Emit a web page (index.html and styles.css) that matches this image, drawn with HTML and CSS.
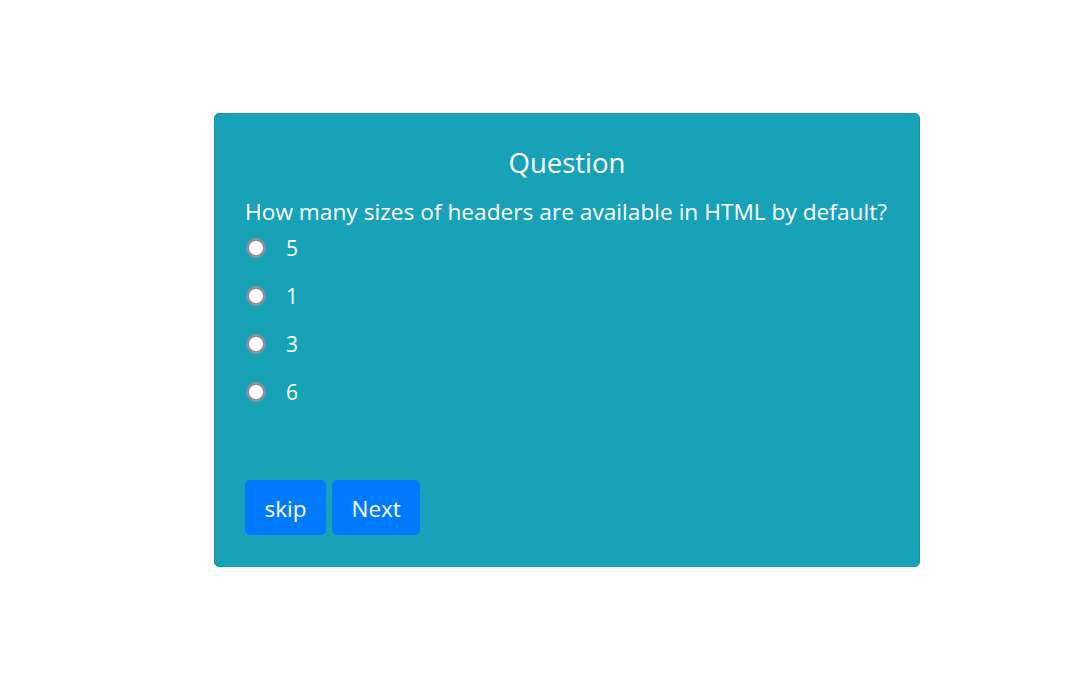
FILE: index.html
```html
<!DOCTYPE html>
<html lang="en">
<head>
<meta charset="utf-8">
<title>Quiz</title>
<link rel="stylesheet" href="styles.css">
</head>
<body>
<main class="page">
  <section class="card">
    <h3 class="card-title">Question</h3>
    <p class="question">How many sizes of headers are available in HTML by default?</p>
    <ul class="options">
      <li class="option"><label><input type="radio" name="answer" class="radio"><span class="opt-text">5</span></label></li>
      <li class="option"><label><input type="radio" name="answer" class="radio"><span class="opt-text">1</span></label></li>
      <li class="option"><label><input type="radio" name="answer" class="radio"><span class="opt-text">3</span></label></li>
      <li class="option"><label><input type="radio" name="answer" class="radio"><span class="opt-text">6</span></label></li>
    </ul>
    <div class="actions">
      <button class="btn" type="button">skip</button>
      <button class="btn" type="button">Next</button>
    </div>
  </section>
</main>
</body>
</html>
```
FILE: styles.css
```css
* { box-sizing: border-box; }
html, body { margin: 0; padding: 0; background: #ffffff; }
body {
  font-family: "Open Sans", "Noto Sans", "DejaVu Sans", sans-serif;
  color: #ffffff;
}
.page {
  padding-top: 113px;
  padding-left: 214px;
}
.card {
  width: 706px;
  height: 454px;
  background: #17a2b8;
  border: 1px solid #1594a8;
  border-radius: 5px;
  padding: 30px;
  display: flex;
  flex-direction: column;
}
.card-title {
  margin: 0;
  font-size: 27.5px;
  font-weight: 400;
  line-height: 38px;
  text-align: center;
}
.question {
  margin: 16px 0 0;
  font-size: 22.7px;
  line-height: 28px;
}
.options {
  list-style: none;
  margin: -2px 0 0;
  padding: 0;
}
.option {
  height: 48px;
  display: flex;
  align-items: center;
}
.option label {
  display: flex;
  align-items: center;
}
.radio {
  appearance: none;
  -webkit-appearance: none;
  margin: 0 0 0 1px;
  width: 20px;
  height: 20px;
  border-radius: 50%;
  border: 3px solid #8f8e9c;
  background: #ffffff;
}
.opt-text {
  margin-left: 20px;
  font-size: 21px;
  line-height: 24px;
}
.actions {
  margin-top: 64px;
  display: flex;
  gap: 6px;
}
.btn {
  font-family: inherit;
  font-size: 22.5px;
  height: 55px;
  padding: 2px 19.5px 0;
  border: none;
  border-radius: 5px;
  background: #007bff;
  color: #ffffff;
}
```
